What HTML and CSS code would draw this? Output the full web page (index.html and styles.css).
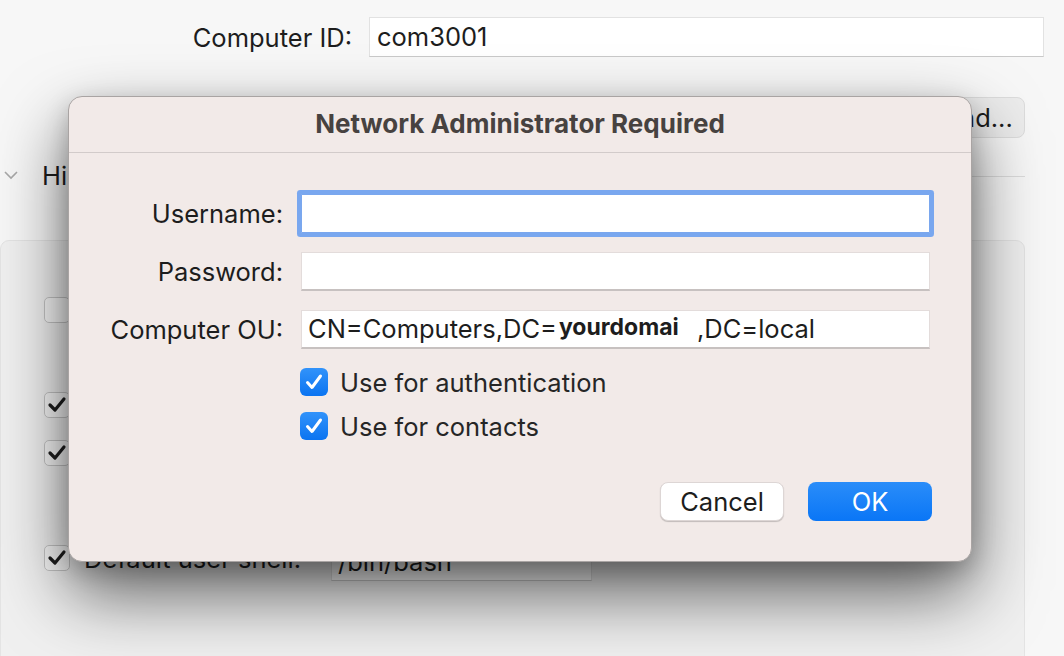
FILE: index.html
```html
<!DOCTYPE html>
<html>
<head>
<meta charset="utf-8">
<link rel="stylesheet" href="styles.css">
</head>
<body>
<div class="window">
  <div class="bg">
    <div class="row-id">
      <span class="lbl">Computer ID:</span>
      <div class="field id-field">com3001</div>
    </div>
    <div class="row-bind">
      <button class="btn-bg">Bind...</button>
    </div>
    <div class="row-disc">
      <svg class="chev" width="14" height="10" viewBox="0 0 14 10"><polyline points="1,2 7,8 13,2" fill="none" stroke="#a8a8a8" stroke-width="1.6"/></svg>
      <span class="disc-text">Hide</span>
      <div class="disc-line"></div>
    </div>
    <div class="panel">
      <div class="p-row p-first"><span class="cb"></span></div>
      <div class="p-row p-check1"><span class="cb on"><svg width="20" height="18" viewBox="0 0 20 18"><polyline points="3,9 8,14 17,3" fill="none" stroke="#1e1e1e" stroke-width="3.2" stroke-linecap="round" stroke-linejoin="round"/></svg></span></div>
      <div class="p-row p-check2"><span class="cb on"><svg width="20" height="18" viewBox="0 0 20 18"><polyline points="3,9 8,14 17,3" fill="none" stroke="#1e1e1e" stroke-width="3.2" stroke-linecap="round" stroke-linejoin="round"/></svg></span></div>
      <div class="p-row p-check3"><span class="cb on"><svg width="20" height="18" viewBox="0 0 20 18"><polyline points="3,9 8,14 17,3" fill="none" stroke="#1e1e1e" stroke-width="3.2" stroke-linecap="round" stroke-linejoin="round"/></svg></span><span class="p-text shell-lbl">Default user shell:</span><div class="field shell-field">/bin/bash</div></div>
    </div>
  </div>

  <div class="dialog">
    <div class="d-title">Network Administrator Required</div>
    <div class="d-body">
      <div class="d-row">
        <span class="d-lbl">Username:</span>
        <div class="d-input focus"></div>
      </div>
      <div class="d-row">
        <span class="d-lbl">Password:</span>
        <div class="d-input"></div>
      </div>
      <div class="d-row">
        <span class="d-lbl">Computer OU:</span>
        <div class="d-input ou">CN=Computers,DC=<span class="redact">yourdomai</span>,DC=local</div>
      </div>
      <div class="d-checks">
        <div class="d-check"><span class="bcb"><svg width="28" height="28" viewBox="0 0 28 28"><polyline points="7.5,14.5 12,19.5 20.5,8" fill="none" stroke="#fff" stroke-width="3" stroke-linecap="round" stroke-linejoin="round"/></svg></span><span>Use for authentication</span></div>
        <div class="d-check"><span class="bcb"><svg width="28" height="28" viewBox="0 0 28 28"><polyline points="7.5,14.5 12,19.5 20.5,8" fill="none" stroke="#fff" stroke-width="3" stroke-linecap="round" stroke-linejoin="round"/></svg></span><span>Use for contacts</span></div>
      </div>
      <div class="d-buttons">
        <button class="d-btn cancel">Cancel</button>
        <button class="d-btn ok">OK</button>
      </div>
    </div>
  </div>
</div>
</body>
</html>
```

FILE: styles.css
```css
html, body {
  margin: 0;
  padding: 0;
}
body {
  width: 1064px;
  height: 656px;
  overflow: hidden;
  background: #f7f7f7;
  font-family: Inter, "Liberation Sans", sans-serif;
  color: #1d1d1d;
}
.window {
  position: relative;
  width: 1064px;
  height: 656px;
  overflow: hidden;
}
.bg {
  padding-top: 17px;
  font-size: 25.5px;
}
.row-id {
  display: flex;
  align-items: center;
  height: 40px;
}
.row-id .lbl {
  width: 352px;
  text-align: right;
  margin-right: 17px;
  white-space: nowrap;
}
.field {
  background: #fff;
  border: 1px solid #e2e2e2;
  border-bottom-color: #c9c9c9;
  box-sizing: border-box;
}
.id-field {
  width: 675px;
  height: 40px;
  padding-left: 7px;
  line-height: 38px;
}
.row-bind {
  display: flex;
  justify-content: flex-end;
  width: 1025px;
  margin-top: 40px;
}
.btn-bg {
  width: 100px;
  height: 41px;
  font: inherit;
  color: #1d1d1d;
  background: #ececec;
  border: 1px solid #dcdcdc;
  border-radius: 8px;
  white-space: nowrap;
}
.row-disc {
  display: flex;
  align-items: center;
  width: 1025px;
  height: 30px;
  margin-top: 22px;
}
.chev {
  margin-left: 4px;
  margin-right: 24px;
}
.disc-text {
  white-space: nowrap;
  width: 200px;
}
.disc-line {
  flex: 1;
  height: 1px;
  background: #dcdcdc;
  margin-left: 14px;
  margin-top: 2px;
}
.panel {
  width: 1025px;
  height: 430px;
  margin-top: 50px;
  background: #f0f0f0;
  border: 1px solid #e4e4e4;
  border-radius: 9px;
  box-sizing: border-box;
  padding-left: 43px;
}
.p-row {
  display: flex;
  align-items: center;
  height: 28px;
}
.p-first { margin-top: 55px; }
.p-check1 { margin-top: 67px; }
.p-check2 { margin-top: 20px; }
.p-check3 { margin-top: 77px; }
.cb {
  width: 26px;
  height: 26px;
  box-sizing: border-box;
  border: 1px solid #c6c6c6;
  border-radius: 5px;
  background: #f7f7f7;
  display: flex;
  align-items: center;
  justify-content: center;
  margin-right: 14px;
  flex: none;
}
.p-text { white-space: nowrap; }
.shell-lbl { width: 247px; flex: none; }
.shell-field {
  width: 261px;
  height: 38px;
  margin-top: 8px;
  padding-left: 6px;
  line-height: 36px;
}

/* dialog */
.dialog {
  position: absolute;
  left: 68px;
  top: 96px;
  width: 904px;
  height: 466px;
  box-sizing: border-box;
  background: #f2eae8;
  border-radius: 14px;
  border: 1px solid #a9a4a3;
  box-shadow: 0 32px 70px rgba(0,0,0,0.6), 0 8px 24px rgba(0,0,0,0.2);
  font-size: 25.5px;
}
.d-title {
  height: 55px;
  border-bottom: 1px solid #d2cbca;
  text-align: center;
  font-weight: 700;
  color: #474240;
  line-height: 54px;
  font-size: 26px;
}
.d-body {
  padding-top: 41px;
}
.d-row {
  display: flex;
  align-items: center;
  height: 39px;
  margin-bottom: 19px;
}
.d-lbl {
  width: 214px;
  text-align: right;
  margin-right: 18px;
  color: #1d1d1d;
  white-space: nowrap;
}
.d-input {
  width: 629px;
  height: 39px;
  box-sizing: border-box;
  background: #fff;
  border: 1px solid #e3dcdb;
  border-bottom: 2px solid #c7c1c0;
  white-space: nowrap;
  padding-left: 6px;
  line-height: 36px;
  overflow: hidden;
}
.d-input.focus {
  border: 1px solid #7aa7ee;
  box-shadow: 0 0 0 4px #79a7ef;
  border-radius: 1px;
}
.redact {
  display: inline-block;
  background: #fff;
  font-weight: 700;
  width: 140px;
  padding-left: 2px;
  box-sizing: border-box;
  font-size: 23px;
  vertical-align: top;
  line-height: 33px;
}
.d-checks {
  padding-left: 231px;
  margin-top: 2px;
}
.d-check {
  display: flex;
  align-items: center;
  height: 28px;
  margin-bottom: 16px;
  color: #262626;
  white-space: nowrap;
}
.bcb {
  width: 28px;
  height: 28px;
  border-radius: 6px;
  background: linear-gradient(#3293fa, #0b74f1);
  margin-right: 12px;
  display: flex;
  flex: none;
}
.d-buttons {
  display: flex;
  justify-content: flex-end;
  gap: 24px;
  padding-right: 39px;
  margin-top: 42px;
}
.d-btn {
  width: 124px;
  height: 39px;
  border-radius: 8px;
  font-family: inherit;
  font-size: 25.5px;
  padding: 0;
}
.cancel {
  background: #fff;
  color: #1d1d1d;
  border: 1px solid #ddd6d5;
  box-shadow: 0 1px 1px rgba(0,0,0,0.2);
}
.ok {
  background: linear-gradient(#2a8df9, #0a76f6);
  color: #fff;
  border: none;
}
```
